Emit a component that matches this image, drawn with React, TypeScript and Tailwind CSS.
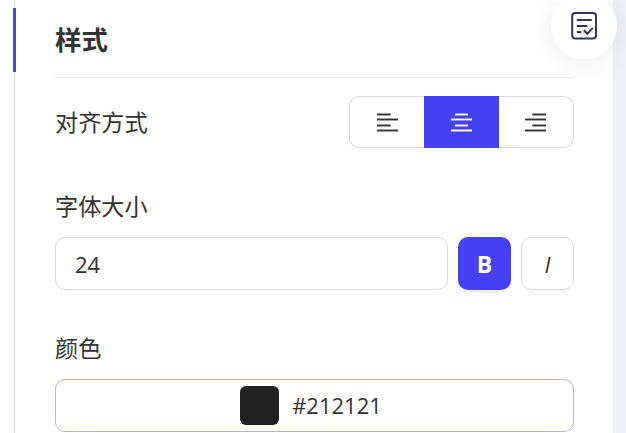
import React, { useState } from 'react';
import clsx from 'clsx';

type Align = 'left' | 'center' | 'right';

const ALIGN_OPTIONS: Align[] = ['left', 'center', 'right'];

// x offset of the short strokes for each alignment
const SHORT_OFFSETS: Record<Align, number> = {
  left: 0,
  center: 4,
  right: 7.3,
};

function AlignIcon({ align }: { align: Align }) {
  const x = SHORT_OFFSETS[align];
  const width = align === 'center' ? 13 : 13.7;

  return (
    <svg width="21" height="20" viewBox="0 0 21 20" fill="currentColor">
      <rect x={x} y="1.55" width={width} height="1.9" />
      <rect x="0" y="6.55" width="21" height="1.9" />
      <rect x={x} y="12.55" width={width} height="1.9" />
      <rect x="0" y="17.55" width="21" height="1.9" />
    </svg>
  );
}

function FormCheckIcon() {
  return (
    <svg
      width="28"
      height="30"
      viewBox="0 0 28 30"
      fill="none"
      stroke="#35355c"
      strokeWidth="2"
      strokeLinejoin="round"
    >
      <rect x="2.2" y="2" width="23.8" height="25.6" rx="3" />
      <path d="M6.8 9h15M6.8 15h10.5M6.8 21h4.5" />
      <path d="M13.8 19.3l3.5 3.5 5.5-5.9" />
    </svg>
  );
}

export default function App() {
  const [align, setAlign] = useState<Align>('center');
  const [bold, setBold] = useState(true);
  const [italic, setItalic] = useState(false);
  const [size, setSize] = useState('24');

  return (
    <div className="relative flex h-[433px] w-[626px] overflow-hidden bg-white font-['Open_Sans','Noto_Sans_CJK_SC',sans-serif] text-[23.2px] text-[#333]">
      <div className="ml-[13px] flex w-[3px] flex-col items-center">
        <div className="h-2 w-px shrink-0 bg-[#d9d9d9]" />
        <div className="h-16 w-[3px] shrink-0 bg-[#4540f4]" />
        <div className="w-px flex-1 bg-[#d9d9d9]" />
      </div>

      <div className="ml-[39px] w-[519px]">
        <div className="flex h-[78px] items-center border-b border-[#ebebeb] pt-1">
          <h2 className="text-[26.4px] font-bold leading-[39px]">样式</h2>
        </div>

        <div className="mt-[18px] flex h-[52px] items-center justify-between">
          <span>对齐方式</span>
          <div className="flex h-full w-[225px] overflow-hidden">
            {ALIGN_OPTIONS.map((option) => (
              <button
                key={option}
                onClick={() => setAlign(option)}
                className={clsx(
                  'flex h-full w-[75px] items-center justify-center border-y',
                  option === 'left' && 'rounded-l-[10px] border-l pl-px',
                  option === 'right' && 'rounded-r-[10px] border-r pr-px',
                  option === align
                    ? 'border-[#4540f4] bg-[#4540f4] text-white'
                    : 'border-[#d9d9d9] text-[#333]'
                )}
              >
                <AlignIcon align={option} />
              </button>
            ))}
          </div>
        </div>

        <div className="mt-[39px] flex h-[38px] items-center">字体大小</div>
        <div className="mt-3 flex h-[53px] gap-2.5">
          <input
            value={size}
            onChange={(e) => setSize(e.target.value)}
            className="w-[393px] rounded-[10px] border border-[#d9d9d9] pt-px pl-[19px] text-[22px] outline-none"
          />
          <button
            onClick={() => setBold(!bold)}
            className={clsx(
              'flex w-[53px] items-center justify-center rounded-[10px] pt-px text-[23px] font-bold',
              bold
                ? 'bg-[#4540f4] text-white shadow-[0_3px_0_rgba(69,64,244,0.08)]'
                : 'border border-[#d9d9d9]'
            )}
          >
            B
          </button>
          <button
            onClick={() => setItalic(!italic)}
            className={clsx(
              'flex w-[53px] items-center justify-center rounded-[10px] pt-px text-[22px] italic',
              italic
                ? 'bg-[#4540f4] text-white'
                : 'border border-[#d9d9d9] shadow-[0_3px_0_rgba(0,0,0,0.02)]'
            )}
          >
            I
          </button>
        </div>

        <div className="mt-[39px] flex h-[38px] items-center">颜色</div>
        <div className="mt-3 flex h-[53px] items-center justify-center gap-[13px] rounded-[10px] border border-[#b7afe8] pr-[7px]">
          <div className="size-[39px] rounded-md bg-[#212121]" />
          <span className="text-[22px]">#212121</span>
        </div>
      </div>

      <div className="ml-[39px] flex-1 bg-[#eff0f5]" />

      {/* floating action */}
      <button className="absolute top-[-7px] left-[550.5px] flex size-[66px] items-center justify-center rounded-full bg-white shadow-[0_4px_28px_rgba(0,0,0,0.07)]">
        <FormCheckIcon />
      </button>
    </div>
  );
}
